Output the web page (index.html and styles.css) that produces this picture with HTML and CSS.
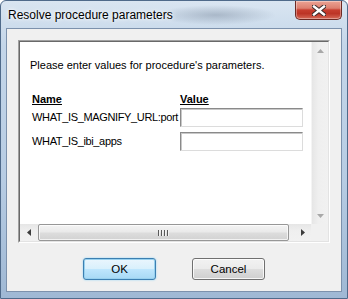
FILE: index.html
```html
<!DOCTYPE html>
<html lang="en">
<head>
  <meta charset="UTF-8" />
  <title>Resolve procedure parameters</title>
  <link rel="stylesheet" href="styles.css">
</head>
<body>
  <div class="window">
    <div class="titlebar">
      <span class="title">Resolve procedure parameters</span>
      <div class="close">
        <svg width="14" height="11" viewBox="0 0 14 11">
          <path d="M2 1.5 L12 9.5 M12 1.5 L2 9.5" stroke="#3a2a2a" stroke-width="4.4" stroke-linecap="square"/>
          <path d="M2 1.5 L12 9.5 M12 1.5 L2 9.5" stroke="#ffffff" stroke-width="2.4" stroke-linecap="square"/>
        </svg>
      </div>
    </div>
    <div class="client">
      <div class="panel">
        <div class="panel-in">
          <div class="content">
            <p class="intro">Please enter values for procedure's parameters.</p>
            <div class="params">
              <div class="head">Name</div>
              <div class="head">Value</div>
              <div class="pname">WHAT_IS_MAGNIFY_URL:port</div>
              <input class="pval" type="text">
              <div class="pname">WHAT_IS_ibi_apps</div>
              <input class="pval" type="text">
            </div>
          </div>
          <div class="vscroll">
            <div class="arrow">
              <svg width="7" height="4" viewBox="0 0 7 4"><path d="M3.5 0 L7 4 L0 4 Z" fill="#a8a8a8"/></svg>
            </div>
            <div class="vtrack"></div>
            <div class="arrow">
              <svg width="7" height="4" viewBox="0 0 7 4"><path d="M0 0 L7 0 L3.5 4 Z" fill="#a8a8a8"/></svg>
            </div>
          </div>
          <div class="hscroll">
            <div class="arrow">
              <svg width="4" height="7" viewBox="0 0 4 7"><path d="M4 0 L4 7 L0 3.5 Z" fill="#3c3c3c"/></svg>
            </div>
            <div class="htrack">
              <div class="thumb">
                <span class="grip"></span><span class="grip"></span><span class="grip"></span><span class="grip"></span>
              </div>
            </div>
            <div class="arrow">
              <svg width="4" height="7" viewBox="0 0 4 7"><path d="M0 0 L4 3.5 L0 7 Z" fill="#3c3c3c"/></svg>
            </div>
          </div>
          <div class="corner"></div>
        </div>
      </div>
      <div class="buttons">
        <button class="btn default">OK</button>
        <button class="btn">Cancel</button>
      </div>
    </div>
  </div>
</body>
</html>
```

FILE: styles.css
```css
body {
  margin: 0;
  font-family: "Liberation Sans", Arial, sans-serif;
  font-size: 11px;
  color: #000;
  background: #fff;
}
.window {
  width: 348px;
  height: 299px;
  box-sizing: border-box;
  border: 1px solid #4f6a8a;
  border-radius: 6px 6px 0 0;
  padding: 0 5px 6px;
  background:
    radial-gradient(ellipse 60px 10px at 215px 14px, rgba(120,135,155,.45), transparent),
    radial-gradient(ellipse 40px 8px at 290px 40px, rgba(255,255,255,.5), transparent),
    linear-gradient(180deg, #d9e5f1 0%, #c4d6e9 15%, #b7cce3 60%, #9fb8d4 100%);
}
.titlebar {
  height: 27px;
  display: flex;
  align-items: center;
  padding-left: 2px;
}
.title {
  font-size: 12px;
  color: #000;
  text-shadow: 0 0 6px #fff, 0 0 3px #fff;
  padding-top: 1px;
}
.close {
  margin-left: auto;
  align-self: flex-start;
  width: 47px;
  height: 19px;
  box-sizing: border-box;
  border: 1px solid #6d2a24;
  border-top: none;
  border-radius: 0 0 5px 5px;
  background: linear-gradient(180deg, #eba394 0%, #dc7f6f 40%, #c73e2f 50%, #bc3426 70%, #d66a58 100%);
  box-shadow: inset 0 0 0 1px rgba(255,255,255,.35);
  display: flex;
  align-items: center;
  justify-content: center;
}
.client {
  height: 264px;
  box-sizing: border-box;
  border: 1px solid #7c91ac;
  background: #f0f0f0;
  padding: 11px 11px 0;
}
.panel {
  height: 203px;
  box-sizing: border-box;
  border: 1px solid;
  border-color: #a0a0a0 #ffffff #ffffff #a0a0a0;
}
.panel-in {
  height: 100%;
  box-sizing: border-box;
  border: 1px solid;
  border-color: #696969 #e3e3e3 #e3e3e3 #696969;
  display: grid;
  grid-template-columns: 1fr 17px;
  grid-template-rows: 1fr 17px;
  background: #fff;
}
.content {
  overflow: hidden;
  padding: 17px 0 0 10px;
}
.intro {
  margin: 0;
  line-height: 13px;
}
.params {
  display: grid;
  grid-template-columns: 148px 123px;
  align-items: center;
  row-gap: 5px;
  margin: 21px 0 0 2px;
}
.head {
  font-weight: bold;
  text-decoration: underline;
  line-height: 13px;
  margin-bottom: -3px;
}
.pname {
  line-height: 13px;
  letter-spacing: -0.35px;
  white-space: nowrap;
}
.pval {
  width: 123px;
  height: 19px;
  box-sizing: border-box;
  margin: 0;
  padding: 0 2px;
  font: inherit;
  border: 1px solid;
  border-color: #8a8a8a #dcdcdc #dcdcdc #8a8a8a;
  box-shadow: inset 1px 1px 0 #c8c8c8;
  background: #fff;
  outline: none;
}
.vscroll {
  display: flex;
  flex-direction: column;
  background: linear-gradient(90deg, #e6e6e6, #efefef 40%, #f1f1f1);
  border-left: 1px solid #f4f4f4;
}
.vtrack {
  flex: 1;
}
.arrow {
  width: 17px;
  height: 17px;
  display: flex;
  align-items: center;
  justify-content: center;
  flex: none;
}
.vscroll .arrow {
  width: 16px;
}
.hscroll {
  display: flex;
  background: linear-gradient(180deg, #e6e6e6, #efefef 40%, #f1f1f1);
}
.htrack {
  flex: 1;
  padding: 0 1px;
  display: flex;
}
.thumb {
  flex: 1;
  margin: 0 4px 0 0;
  box-sizing: border-box;
  border: 1px solid #979797;
  border-radius: 2px;
  background: linear-gradient(180deg, #f4f4f4 0%, #eaeaea 45%, #dcdcdc 55%, #d2d2d2 100%);
  box-shadow: inset 0 0 0 1px rgba(255,255,255,.7);
  display: flex;
  align-items: center;
  justify-content: center;
  gap: 1px;
}
.grip {
  width: 1px;
  height: 6px;
  background: #5a5a5a;
  border-right: 1px solid #f2f2f2;
}
.corner {
  background: #f0f0f0;
}
.buttons {
  display: flex;
  justify-content: center;
  gap: 36px;
  margin-top: 15px;
}
.btn {
  width: 73px;
  height: 22px;
  font-family: "Liberation Sans", Arial, sans-serif;
  font-size: 11.5px;
  color: #000;
  border: 1px solid #707070;
  border-radius: 3px;
  background: linear-gradient(180deg, #f2f2f2 0%, #ebebeb 48%, #dddddd 52%, #cfcfcf 100%);
  box-shadow: inset 0 0 0 1px rgba(255,255,255,.8);
  padding: 0;
}
.btn.default {
  border-color: #3c7fb1;
  background: linear-gradient(180deg, #eaf6fd 0%, #d9f0fc 48%, #bee6fd 52%, #a7d9f5 100%);
  box-shadow: inset 0 0 0 1px #98d1ef, 0 0 2px #8ad2f7;
}
```
